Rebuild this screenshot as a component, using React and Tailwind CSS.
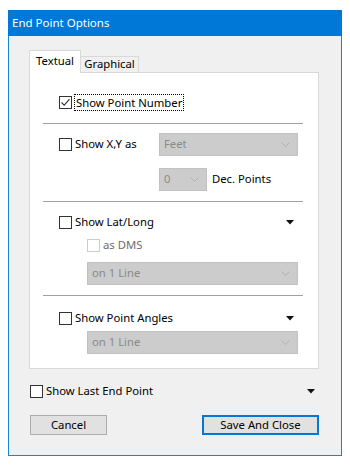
import React from 'react';

const font = { fontFamily: '"Noto Sans", "Open Sans", sans-serif' };

function CheckBox({ checked = false, disabled = false }) {
  return (
    <div
      className={`w-[13px] h-[13px] shrink-0 bg-white border ${disabled ? 'border-[#cccccc]' : 'border-[#333333]'} flex items-center justify-center`}
    >
      {checked && (
        <svg width="11" height="11" viewBox="0 0 11 11">
          <path d="M1.5 5.5 L4.2 8.2 L9.5 2.2" fill="none" stroke="#333333" strokeWidth="1.1" />
        </svg>
      )}
    </div>
  );
}

function DropDown({ value, className }) {
  return (
    <div className={`h-[23px] bg-[#cccccc] border border-[#c2c2c2] flex items-center justify-between pl-[4px] pr-[7px] text-[#8a8a8a] ${className}`}>
      <span>{value}</span>
      <svg width="9" height="6" viewBox="0 0 9 6">
        <path d="M0.5 0.5 L4.5 4.5 L8.5 0.5" fill="none" stroke="#b0b0b0" strokeWidth="1" />
      </svg>
    </div>
  );
}

function Arrow() {
  return (
    <svg width="8" height="5" viewBox="0 0 8 5">
      <polygon points="0,0 8,0 4,4.5" fill="#111111" />
    </svg>
  );
}

function Separator() {
  return <div className="h-px bg-[#a0a0a0]" />;
}

export default function App() {
  return (
    <div className="w-[350px] h-[466px] bg-white pt-[10px] pl-[8px] text-[11.3px] text-black" style={font}>
      <div className="w-[334px] h-[446px] flex flex-col">
        {/* Title bar */}
        <div className="h-[26px] bg-[#0078d7] text-white flex items-center pl-[4px] text-[11.5px]">
          End Point Options
        </div>

        <div className="flex-1 bg-[#f0f0f0] border-x border-b border-[#1883d7] pl-[20px] pt-[14px]">
          {/* Tabs */}
          <div className="flex items-start">
            <div className="relative z-10 h-[23px] w-[52px] bg-white border-x border-t border-[#d9d9d9] flex items-center justify-center pb-[1px]">
              Textual
            </div>
            <div className="mt-[6px] h-[16px] w-[58px] bg-[#f0f0f0] border-t border-r border-[#d9d9d9] flex items-center justify-center">
              Graphical
            </div>
          </div>

          {/* Panel */}
          <div className="-mt-px w-[290px] h-[297px] bg-white border border-[#d9d9d9] pl-[13px] pr-[15px] flex flex-col">
            <div className="mt-[18px] h-[23px] pl-[16px] flex items-center">
              <CheckBox checked />
              <span className="ml-[2px] px-[1px] border border-dotted border-black leading-[15px]">Show Point Number</span>
            </div>

            <div className="mt-[9px]"><Separator /></div>

            <div className="mt-[9px] h-[23px] pl-[16px] flex items-center">
              <div className="w-[100px] flex items-center">
                <CheckBox />
                <span className="ml-[3px]">Show X,Y as</span>
              </div>
              <DropDown value="Feet" className="w-[139px]" />
            </div>

            <div className="mt-[12px] h-[23px] pl-[116px] flex items-center">
              <DropDown value="0" className="w-[48px]" />
              <span className="ml-[5px]">Dec. Points</span>
            </div>

            <div className="mt-[10px]"><Separator /></div>

            <div className="mt-[9px] h-[23px] pl-[16px] pr-[9px] flex items-center justify-between">
              <div className="flex items-center">
                <CheckBox />
                <span className="ml-[3px]">Show Lat/Long</span>
              </div>
              <Arrow />
            </div>

            <div className="h-[22px] pl-[44px] flex items-center">
              <CheckBox disabled />
              <span className="ml-[3px] text-[#6d6d6d]">as DMS</span>
            </div>

            <div className="mt-[6px] pl-[44px] pr-[4px]">
              <DropDown value="on 1 Line" className="w-[211px]" />
            </div>

            <div className="mt-[10px]"><Separator /></div>

            <div className="mt-[11px] h-[23px] pl-[16px] pr-[9px] flex items-center justify-between">
              <div className="flex items-center">
                <CheckBox />
                <span className="ml-[3px]">Show Point Angles</span>
              </div>
              <Arrow />
            </div>

            <div className="mt-[1px] pl-[44px] pr-[4px]">
              <DropDown value="on 1 Line" className="w-[211px]" />
            </div>
          </div>

          {/* Bottom */}
          <div className="mt-[11px] w-[290px] h-[23px] pl-[1px] pr-[4px] flex items-center justify-between">
            <div className="flex items-center">
              <CheckBox />
              <span className="ml-[3px]">Show Last End Point</span>
            </div>
            <Arrow />
          </div>

          <div className="mt-[12px] w-[290px] flex items-center justify-between pl-[1px]">
            <button className="w-[77px] h-[20px] bg-[#e1e1e1] border border-[#adadad] flex items-center justify-center">
              Cancel
            </button>
            <button className="w-[117px] h-[20px] bg-[#e1e1e1] border-2 border-[#0078d7] flex items-center justify-center">
              Save And Close
            </button>
          </div>
        </div>
      </div>
    </div>
  );
}
